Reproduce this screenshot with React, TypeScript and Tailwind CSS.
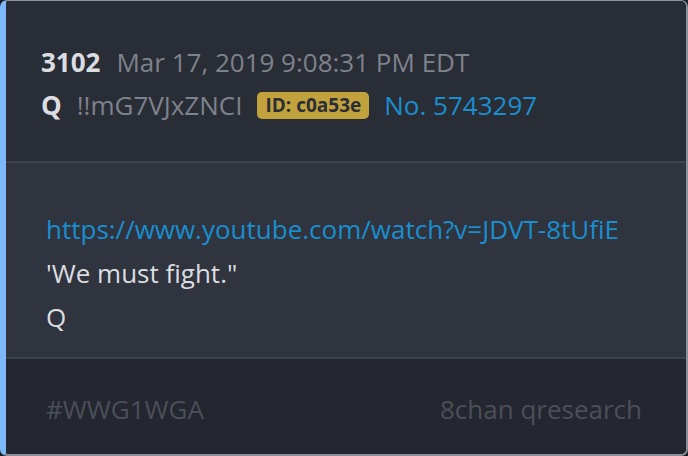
import React from 'react';

const font = { fontFamily: '"Open Sans", "Noto Sans", sans-serif' };

const App: React.FC = () => {
  return (
    <div className="w-[688px] h-[456px] bg-[#1d2026]" style={font}>
      <div className="h-full flex flex-col overflow-hidden rounded-[7px] border-t border-r-2 border-b-2 border-l-[6px] border-t-[#8b8f97] border-r-[#8b8f97] border-b-[#8b8f97] border-l-[#7db9f8]">
        {/* Header */}
        <div className="bg-[#292d36] pl-[35px] pt-[40px] pb-[34px] text-[26px] leading-[43px]">
          <div className="flex items-center gap-4">
            <span className="font-bold text-[#dcdde0]">3102</span>
            <span className="text-[#7e828c]">Mar 17, 2019 9:08:31 PM EDT</span>
          </div>
          <div className="flex items-center gap-[15px]">
            <span className="font-bold text-[#dcdde0]">Q</span>
            <span className="text-[#7e828c]">!!mG7VJxZNCI</span>
            <span className="rounded-[5px] bg-[#c2a23c] px-2 text-[19px] font-bold leading-[27px] text-[#2b2e36]">ID: c0a53e</span>
            <span className="text-[#1a8ecf]">No. 5743297</span>
          </div>
        </div>

        <div className="h-[2px] bg-[#3d414b]" />

        {/* Body */}
        <div className="bg-[#2f343e] pl-[40px] pt-[44px] pb-[18px] text-[26px] leading-[44px] text-[#dcdde0]">
          <div className="text-[#1a8ecf]">https://www.youtube.com/watch?v=JDVT-8tUfiE</div>
          <div>'We must fight."</div>
          <div>Q</div>
        </div>

        <div className="h-[2px] bg-[#3d414b]" />

        {/* Footer */}
        <div className="flex-1 bg-[#24272f] pl-[40px] pr-[44px] pt-[35px] flex justify-between text-[26px] leading-[30px] text-[#4b4f59]">
          <span>#WWG1WGA</span>
          <span>8chan qresearch</span>
        </div>
      </div>
    </div>
  );
};

export default App;
